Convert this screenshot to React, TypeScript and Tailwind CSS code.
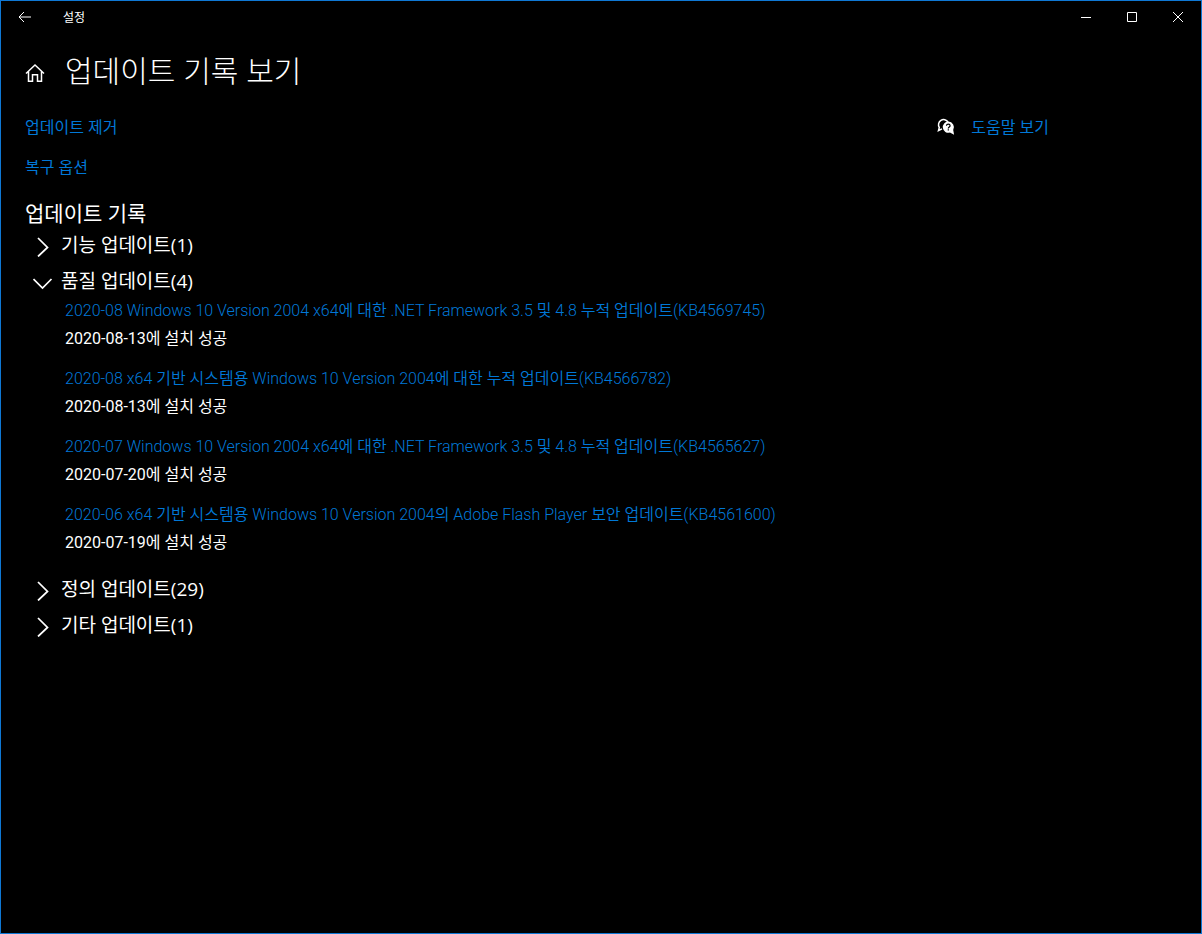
import { useState } from "react";
import type { PropsWithChildren } from "react";

type Update = {
  title: string;
  status: string;
};

type UpdateGroup = {
  id: string;
  label: string;
  count: number;
  updates: Update[];
};

const updateGroups: UpdateGroup[] = [
  { id: "feature", label: "기능 업데이트", count: 1, updates: [] },
  {
    id: "quality",
    label: "품질 업데이트",
    count: 4,
    updates: [
      {
        title:
          "2020-08 Windows 10 Version 2004 x64에 대한 .NET Framework 3.5 및 4.8 누적 업데이트(KB4569745)",
        status: "2020-08-13에 설치 성공",
      },
      {
        title:
          "2020-08 x64 기반 시스템용 Windows 10 Version 2004에 대한 누적 업데이트(KB4566782)",
        status: "2020-08-13에 설치 성공",
      },
      {
        title:
          "2020-07 Windows 10 Version 2004 x64에 대한 .NET Framework 3.5 및 4.8 누적 업데이트(KB4565627)",
        status: "2020-07-20에 설치 성공",
      },
      {
        title:
          "2020-06 x64 기반 시스템용 Windows 10 Version 2004의 Adobe Flash Player 보안 업데이트(KB4561600)",
        status: "2020-07-19에 설치 성공",
      },
    ],
  },
  { id: "definition", label: "정의 업데이트", count: 29, updates: [] },
  { id: "other", label: "기타 업데이트", count: 1, updates: [] },
];

export default function App() {
  return (
    <div className="flex min-h-screen flex-col border border-[#0f78d4] bg-black font-['Open_Sans','Noto_Sans_CJK_KR',sans-serif] text-white">
      <TitleBar />
      <main className="flex-1 px-6">
        <header className="flex items-center gap-5 pt-[18px]">
          <button aria-label="홈" type="button">
            <HomeIcon />
          </button>
          <h1 className="pb-1 text-[30px] leading-10 font-light">
            업데이트 기록 보기
          </h1>
        </header>
        <div className="flex justify-between pt-5">
          <nav className="flex flex-col items-start gap-4">
            <TextLink>업데이트 제거</TextLink>
            <TextLink>복구 옵션</TextLink>
          </nav>
          <div className="flex items-center gap-4 self-start pr-32">
            <HelpIcon />
            <TextLink>도움말 보기</TextLink>
          </div>
        </div>
        <section className="pt-[18px]">
          <h2 className="text-[21px] leading-8">업데이트 기록</h2>
          {updateGroups.map((group) => (
            <Group key={group.id} {...group} />
          ))}
        </section>
      </main>
    </div>
  );
}

function TitleBar() {
  return (
    <div className="flex h-8 items-center justify-between">
      <div className="flex h-full items-center">
        <button
          aria-label="뒤로"
          className="grid h-full w-12 place-items-center"
          type="button"
        >
          <svg width="14" height="12" fill="none" stroke="currentColor">
            <path d="M13 6H1M6 1 1 6l5 5" />
          </svg>
        </button>
        <span className="pt-0.5 pl-3.5 text-xs">설정</span>
      </div>
      <div className="flex h-full">
        <WindowButton label="최소화">
          <path d="M0 5.5h10" />
        </WindowButton>
        <WindowButton label="최대화">
          <path d="M.5.5h9v9h-9z" />
        </WindowButton>
        <WindowButton label="닫기">
          <path d="m0 0 10 10M10 0 0 10" />
        </WindowButton>
      </div>
    </div>
  );
}

function WindowButton({ label, children }: PropsWithChildren<{ label: string }>) {
  return (
    <button
      aria-label={label}
      className="grid h-full w-[46px] place-items-center"
      type="button"
    >
      <svg width="10" height="10" fill="none" stroke="currentColor">
        {children}
      </svg>
    </button>
  );
}

function TextLink({ children }: PropsWithChildren) {
  return (
    <a className="text-base leading-6 text-[#0078d7]" href="#">
      {children}
    </a>
  );
}

function Group({ id, label, count, updates }: UpdateGroup) {
  const [open, setOpen] = useState(updates.length > 0);

  return (
    <div className="pb-1">
      <h3>
        <button
          aria-controls={id}
          aria-expanded={open}
          className="flex h-8 items-center gap-2 pl-2"
          onClick={() => setOpen((current) => !current)}
          type="button"
        >
          <svg
            className="mt-1"
            width="20"
            height="20"
            fill="none"
            stroke="currentColor"
            strokeWidth="1.75"
          >
            <path d={open ? "m.5 6 9 9 9-9" : "m5 1 9.500 9.500-9.500 9"} />
          </svg>
          <span className="text-[19px] leading-6">
            {label}({count})
          </span>
        </button>
      </h3>
      {open && updates.length > 0 && (
        <ul
          className="space-y-3 pb-3 pl-10 font-['Roboto','Noto_Sans_CJK_KR',sans-serif]"
          id={id}
        >
          {updates.map((update) => (
            <li className="text-base leading-7" key={update.title}>
              <a className="block font-[350] text-[#0078d7]" href="#">
                {update.title}
              </a>
              <p>{update.status}</p>
            </li>
          ))}
        </ul>
      )}
    </div>
  );
}

function HomeIcon() {
  return (
    <svg
      width="20"
      height="20"
      viewBox="0 0 20 20"
      fill="none"
      stroke="currentColor"
      strokeWidth="1.5"
    >
      <path d="M1 10.500 10 2l9 8.500M3.500 8.500v9.700h4v-6.500h5v6.500h4V8.500" />
    </svg>
  );
}

function HelpIcon() {
  return (
    <svg width="18" height="18" viewBox="0 0 18 18" fill="none">
      <path
        d="M5 10.800 1.500 12.500 2.300 9.500A5 5 0 1 1 11 4"
        stroke="currentColor"
        strokeWidth="1.500"
      />
      <path
        d="M11.300 3.600a5.600 5.600 0 0 1 4.900 8.400l.9 4.800-4.200-2.200A5.600 5.600 0 1 1 11.300 3.600Z"
        fill="currentColor"
      />
      <path
        d="M9.500 7.700c0-2.200 3.600-2.100 3.600 0 0 1.300-1.800 1.300-1.800 2.700M11.300 11.200v1.300"
        stroke="#000"
        strokeWidth="1.200"
      />
    </svg>
  );
}
